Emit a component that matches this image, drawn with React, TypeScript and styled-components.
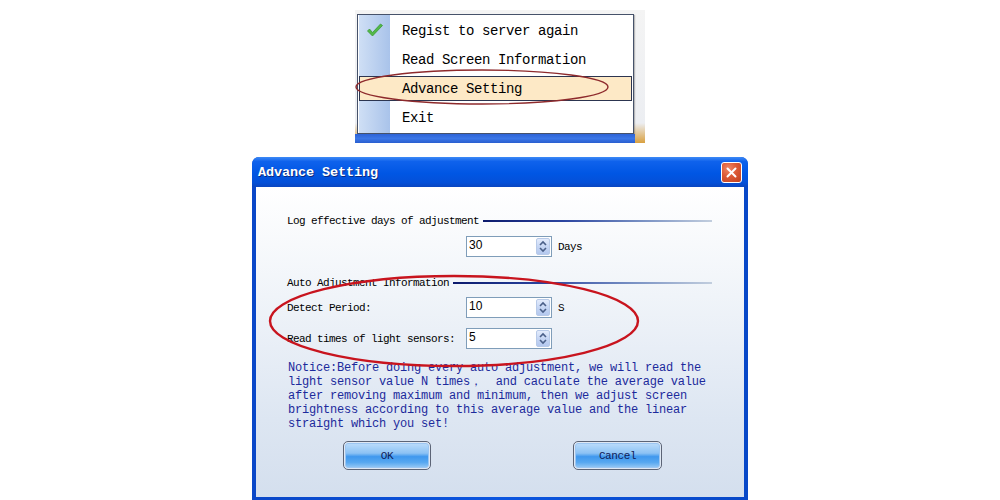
import React from 'react';
import styled, { createGlobalStyle } from 'styled-components';

const GlobalStyle = createGlobalStyle`
  html, body {
    margin: 0;
    padding: 0;
    background: #ffffff;
  }
  body {
    width: 1000px;
    height: 500px;
    overflow: hidden;
  }
`;

const Page = styled.div`
  width: 1000px;
  height: 500px;
  display: flex;
  flex-direction: column;
  align-items: center;
`;

/* ---------- tray menu screenshot ---------- */

const MenuShot = styled.div`
  position: relative;
  width: 290px;
  height: 133px;
  margin-top: 10px;
  display: flex;
  flex-direction: column;
  background: linear-gradient(to bottom, #f4f4f4 0%, #eceef2 85%, #d9a040 100%);
`;

const MenuArea = styled.div`
  display: flex;
  height: 124px;
  padding: 4px 11px 0 2px;
  box-sizing: border-box;
`;

const Menu = styled.div`
  width: 277px;
  height: 120px;
  box-sizing: border-box;
  border: 1px solid #46526a;
  padding: 1px 0;
  background: linear-gradient(
    to right,
    #ffffff 0px,
    #ffffff 1px,
    #cfdff5 1px,
    #a9c3ea 32px,
    #ffffff 32px
  );
  box-shadow: 1px 1px 1px rgba(80, 80, 80, 0.35);
`;

const MenuItem = styled.div<{ $active?: boolean }>`
  display: flex;
  align-items: center;
  box-sizing: border-box;
  height: ${(p) => (p.$active ? '25px' : '29px')};
  margin: ${(p) => (p.$active ? '2px 1px' : '0')};
  border: ${(p) => (p.$active ? '1px solid #2c3550' : 'none')};
  background: ${(p) => (p.$active ? '#fde9c6' : 'transparent')};
  padding-left: ${(p) => (p.$active ? '0' : '1px')};
`;

const IconSlot = styled.div<{ $active?: boolean }>`
  width: ${(p) => (p.$active ? '30px' : '31px')};
  height: 100%;
  display: flex;
  align-items: center;
  justify-content: center;
`;

const MenuLabel = styled.span`
  margin-left: 12px;
  font-family: 'Liberation Mono', 'DejaVu Sans Mono', monospace;
  font-size: 14px;
  letter-spacing: -0.4px;
  color: #000;
  line-height: 1;
`;

const Taskbar = styled.div`
  height: 9px;
  background: linear-gradient(to bottom, #2d63d6 0%, #3b76e6 50%, #2a5fd0 100%);
  margin-right: 10px;
`;

const Mark = styled.svg`
  position: absolute;
  left: 0;
  top: 0;
  pointer-events: none;
`;

/* ---------- dialog ---------- */

const Dialog = styled.div`
  position: relative;
  margin-top: 14px;
  width: 496px;
  height: 343px;
  display: flex;
  flex-direction: column;
  background: linear-gradient(to right, #0a47c8 0%, #0c56e0 50%, #0848c8 100%);
  border-radius: 7px 7px 0 0;
`;

const TitleBar = styled.div`
  height: 30px;
  display: flex;
  align-items: center;
  justify-content: space-between;
  padding: 0 6px 0 6px;
  border-radius: 7px 7px 0 0;
  background: linear-gradient(
    to bottom,
    #3d8af6 0%,
    #0f62ec 15%,
    #0056e4 55%,
    #0450d8 85%,
    #0a46c0 100%
  );
`;

const Title = styled.span`
  font-family: 'Liberation Mono', 'DejaVu Sans Mono', monospace;
  font-weight: bold;
  font-size: 13.5px;
  letter-spacing: -0.1px;
  color: #ffffff;
  text-shadow: 1px 1px 0 #0a2a80;
`;

const CloseButton = styled.div`
  width: 19px;
  height: 19px;
  border: 1px solid #ffffff;
  border-radius: 3px;
  background: radial-gradient(circle at 35% 30%, #f08868 0%, #dc5a36 45%, #c0401e 100%);
  display: flex;
  align-items: center;
  justify-content: center;
  margin-top: 1px;
`;

const Body = styled.div`
  flex: 1;
  margin: 0 4px 3px;
  padding: 27px 32px 0 31px;
  background: linear-gradient(to bottom, #ffffff 0%, #f0f4f9 35%, #dde6f2 75%, #d4dfee 100%);
  display: flex;
  flex-direction: column;
`;

const SectionHeader = styled.div<{ $gap: number }>`
  display: flex;
  align-items: center;
  height: 14px;
  margin-top: ${(p) => p.$gap}px;
  gap: 4px;
`;

const Label = styled.span`
  font-family: 'Liberation Mono', 'DejaVu Sans Mono', monospace;
  font-size: 11px;
  letter-spacing: -0.6px;
  color: #000;
  white-space: nowrap;
`;

const Rule = styled.div`
  flex: 1;
  height: 2px;
  background: linear-gradient(to right, #0c1a6c 0%, #2a44a0 35%, #7a92c4 70%, #c2cede 100%);
`;

const FieldRow = styled.div<{ $gap: number }>`
  display: grid;
  grid-template-columns: 173px 86px auto;
  column-gap: 6px;
  align-items: center;
  height: 21px;
  margin-top: ${(p) => p.$gap}px;
`;

const SpinBox = styled.div`
  height: 21px;
  box-sizing: border-box;
  border: 1px solid #7f9db9;
  background: #ffffff;
  display: flex;
  align-items: center;
  justify-content: space-between;
  padding: 0 1px 0 2px;
`;

const SpinValue = styled.span`
  font-family: 'Liberation Sans', Arial, sans-serif;
  font-size: 12px;
  color: #000;
  margin-top: -3px;
`;

const SpinButton = styled.div`
  width: 14px;
  height: 17px;
  border-radius: 2px;
  background: linear-gradient(to bottom, #e4ecfc 0%, #c6d6f4 50%, #b4c8ee 100%);
  border: 1px solid #b8cae8;
  box-sizing: border-box;
  display: flex;
  align-items: center;
  justify-content: center;
`;

const Notice = styled.div`
  margin-top: 12px;
  padding-left: 1px;
  font-family: 'Liberation Mono', 'DejaVu Sans Mono', monospace;
  font-size: 12px;
  letter-spacing: -0.2px;
  line-height: 14px;
  color: #1c2a9c;
  white-space: pre;
`;

const ButtonRow = styled.div`
  display: flex;
  gap: 142px;
  padding-left: 56px;
  margin-top: 10px;
`;

const Button = styled.div<{ $width: number }>`
  width: ${(p) => p.$width}px;
  height: 29px;
  box-sizing: border-box;
  border: 1px solid #5c6476;
  border-radius: 5px;
  padding: 1px;
  background: #dfe8f4;
  display: flex;
`;

const ButtonFace = styled.div`
  flex: 1;
  border-radius: 3px;
  border: 1px solid #9cc6f2;
  background: linear-gradient(
    to bottom,
    #b8dafa 0%,
    #8cc2f4 40%,
    #3f98ee 55%,
    #58a8f0 80%,
    #8ec4f4 100%
  );
  display: flex;
  align-items: center;
  justify-content: center;
  font-family: 'Liberation Mono', 'DejaVu Sans Mono', monospace;
  font-size: 11px;
  letter-spacing: -0.4px;
  color: #101c58;
`;

const CheckIcon = () => (
  <svg width="18" height="15" viewBox="0 0 18 15">
    <path d="M1.5 8 L6.5 13 L16.5 2.5 L14.5 1 L6.5 9.5 L3.5 6 Z" fill="#52b848" stroke="#3b9a34" strokeWidth="0.8" />
  </svg>
);

const SpinArrows = () => (
  <svg width="10" height="13" viewBox="0 0 10 13">
    <path d="M2 5 L5 2 L8 5" fill="none" stroke="#4a5f88" strokeWidth="1.6" />
    <path d="M2 8 L5 11 L8 8" fill="none" stroke="#4a5f88" strokeWidth="1.6" />
  </svg>
);

const Spin = ({ value }: { value: string }) => (
  <SpinBox>
    <SpinValue>{value}</SpinValue>
    <SpinButton>
      <SpinArrows />
    </SpinButton>
  </SpinBox>
);

const menuItems = ['Regist to server again', 'Read Screen Information', 'Advance Setting', 'Exit'];

const noticeText = [
  'Notice:Before doing every auto adjustment, we will read the',
  'light sensor value N times，  and caculate the average value',
  'after removing maximum and minimum, then we adjust screen',
  'brightness according to this average value and the linear',
  'straight which you set!',
].join('\n');

export default function App() {
  return (
    <>
      <GlobalStyle />
      <Page>
        <MenuShot>
          <MenuArea>
            <Menu>
              {menuItems.map((item, i) => {
                const active = item === 'Advance Setting';
                return (
                  <MenuItem key={item} $active={active}>
                    <IconSlot $active={active}>{i === 0 && <CheckIcon />}</IconSlot>
                    <MenuLabel>{item}</MenuLabel>
                  </MenuItem>
                );
              })}
            </Menu>
          </MenuArea>
          <Taskbar />
          <Mark width="290" height="133">
            <ellipse cx="127" cy="77" rx="126" ry="17" fill="none" stroke="#8e2a2c" strokeWidth="1.4" />
          </Mark>
        </MenuShot>

        <Dialog>
          <TitleBar>
            <Title>Advance Setting</Title>
            <CloseButton>
              <svg width="11" height="11" viewBox="0 0 11 11">
                <path d="M1.5 1.5 L9.5 9.5 M9.5 1.5 L1.5 9.5" stroke="#ffffff" strokeWidth="2" strokeLinecap="round" />
              </svg>
            </CloseButton>
          </TitleBar>
          <Body>
            <SectionHeader $gap={0}>
              <Label>Log effective days of adjustment</Label>
              <Rule />
            </SectionHeader>
            <FieldRow $gap={8}>
              <span />
              <Spin value="30" />
              <Label>Days</Label>
            </FieldRow>

            <SectionHeader $gap={19}>
              <Label>Auto Adjustment Information</Label>
              <Rule />
            </SectionHeader>
            <FieldRow $gap={7}>
              <Label>Detect Period:</Label>
              <Spin value="10" />
              <Label>S</Label>
            </FieldRow>
            <FieldRow $gap={10}>
              <Label>Read times of light sensors:</Label>
              <Spin value="5" />
              <span />
            </FieldRow>

            <Notice>{noticeText}</Notice>

            <ButtonRow>
              <Button $width={88}>
                <ButtonFace>OK</ButtonFace>
              </Button>
              <Button $width={89}>
                <ButtonFace>Cancel</ButtonFace>
              </Button>
            </ButtonRow>
          </Body>
          <Mark width="496" height="343">
            <ellipse cx="202" cy="164" rx="184" ry="45" fill="none" stroke="#c8141e" strokeWidth="2.4" />
          </Mark>
        </Dialog>
      </Page>
    </>
  );
}
